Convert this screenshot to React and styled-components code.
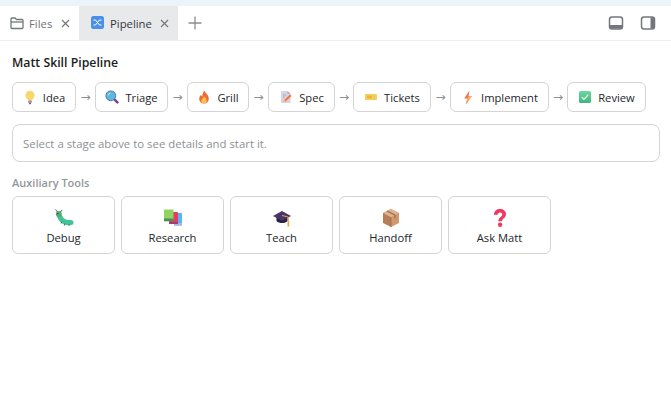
import React from "react";
import styled, { createGlobalStyle } from "styled-components";

const GlobalStyle = createGlobalStyle`
  html, body { margin: 0; padding: 0; background: #fff; }
  body { font-family: "Open Sans", "Noto Sans", "Liberation Sans", sans-serif; color: #1f2328; }
`;

const Page = styled.div`
  width: 671px;
  height: 403px;
  overflow: hidden;
  display: flex;
  flex-direction: column;
`;

const TopStrip = styled.div`
  height: 6px;
  background: #ebf4f9;
`;

const TabBar = styled.div`
  height: 34px;
  display: flex;
  align-items: stretch;
  border-bottom: 1px solid #eeeeee;
`;

const Tab = styled.div`
  width: ${(p) => p.$width}px;
  display: flex;
  align-items: center;
  padding-left: ${(p) => p.$pad}px;
  box-sizing: border-box;
  background: ${(p) => (p.$active ? "#e8e9eb" : "#fff")};
  color: ${(p) => (p.$active ? "#33383e" : "#6f7479")};
  font-size: 11.3px;
`;

const TabIcon = styled.span`
  display: flex;
  width: 14px;
  height: 14px;
  margin-right: ${(p) => p.$gap}px;
`;

const TabClose = styled.span`
  display: flex;
  margin-left: auto;
  margin-right: ${(p) => p.$right}px;
`;

const AddTab = styled.div`
  width: 34px;
  display: flex;
  align-items: center;
  justify-content: center;
`;

const BarActions = styled.div`
  margin-left: auto;
  display: flex;
  align-items: center;
  gap: 16px;
  padding-right: 15px;
`;

const Content = styled.div`
  padding: 13px 12px 0;
  display: flex;
  flex-direction: column;
`;

const Title = styled.div`
  font-size: 12.3px;
  line-height: 17px;
  font-weight: 600;
  color: #1a1d21;
`;

const Flow = styled.div`
  display: flex;
  align-items: center;
  margin-top: 11px;
`;

const Stage = styled.div`
  width: ${(p) => p.$width}px;
  height: 30px;
  box-sizing: border-box;
  border: 1px solid #d4d4d4;
  border-radius: 6px;
  display: flex;
  align-items: center;
  justify-content: center;
  gap: 6px;
  font-size: 11.2px;
  color: #22262b;
  background: #fff;
`;

const Arrow = styled.span`
  width: ${(p) => p.$width}px;
  text-align: center;
  color: #8b8d90;
  font-size: 12px;
  font-family: "DejaVu Sans", sans-serif;
`;

const Hint = styled.div`
  margin-top: 12px;
  width: 648px;
  height: 38px;
  box-sizing: border-box;
  border: 1px solid #d4d4d4;
  border-radius: 8px;
  padding-left: 10px;
  display: flex;
  align-items: center;
  font-size: 11.4px;
  color: #8d9094;
`;

const SectionLabel = styled.div`
  margin-top: 13px;
  font-size: 11px;
  line-height: 15px;
  font-weight: 600;
  color: #94979b;
`;

const ToolRow = styled.div`
  display: flex;
  gap: 6px;
  margin-top: 6px;
`;

const Tool = styled.div`
  width: 103px;
  height: 58px;
  box-sizing: border-box;
  border: 1px solid #d4d4d4;
  border-radius: 6px;
  display: flex;
  flex-direction: column;
  align-items: center;
  justify-content: flex-start;
  padding-top: 11px;
  font-size: 11.2px;
  color: #22262b;
`;

const ToolIcon = styled.span`
  display: flex;
  height: 20px;
  margin-bottom: 1px;
`;

const ToolName = styled.span`
  line-height: 17px;
`;

const Bulb = () => (
  <svg width="14" height="15" viewBox="0 0 14 15">
    <path d="M7 .8a4.600 4.600 0 0 0-2.800 8.200c.5.5.8 1 .9 1.700h3.800c.1-.7.4-1.200.9-1.700A4.600 4.600 0 0 0 7 .8z" fill="#f8d76e" />
    <rect x="5.200" y="10.500" width="3.600" height="2.600" rx=".8" fill="#a08fb0" />
    <rect x="6" y="13" width="2" height="1.200" fill="#7a668a" />
  </svg>
);
const Magnifier = () => (
  <svg width="14" height="14" viewBox="0 0 14 14">
    <path d="M8.600 8.600l3.800 3.800" stroke="#74409a" strokeWidth="2.400" strokeLinecap="round" />
    <circle cx="5.800" cy="5.800" r="4.900" fill="#5fb8dc" stroke="#4a7ea8" strokeWidth="1" />
    <path d="M3.200 5.400a2.800 2.800 0 0 1 2.200-2.200" stroke="#c6e9f6" strokeWidth="1" fill="none" />
  </svg>
);
const Fire = () => (
  <svg width="14" height="14" viewBox="0 0 14 14">
    <path d="M7.400.4c.4 2.400 4.400 4 4.400 8.400A4.700 4.700 0 0 1 7 13.600a4.700 4.700 0 0 1-4.800-4.800c0-1.900 1.100-3.200 1.900-4.100.2 1 .6 1.600 1.300 1.900C5.200 4.500 6 2.200 7.400.4z" fill="#ee6a32" />
    <path d="M7.300 6.200c.3 1.300 2.400 2 2.400 4.300A2.600 2.600 0 0 1 7 13.300a2.600 2.600 0 0 1-2.700-2.800c0-1.600 2.400-2.500 3-4.300z" fill="#fbc04e" />
  </svg>
);
const Memo = () => (
  <svg width="14" height="14" viewBox="0 0 14 14">
    <path d="M2 1h6.500L11.500 4v9H2z" fill="#d9d2e3" />
    <path d="M8.500 1v3h3z" fill="#b4a9c4" />
    <path d="M4 5h3M4 7h2" stroke="#a99dba" strokeWidth=".8" />
    <path d="M4.500 12l.6-2 6-5.500 1.500 1.500-6 5.500z" fill="#f0783c" />
    <path d="M4.500 12l.6-2 1.500 1.500z" fill="#f7c9a0" />
  </svg>
);
const Ticket = () => (
  <svg width="14" height="14" viewBox="0 0 14 14">
    <rect x="1" y="4" width="12" height="6" rx=".6" fill="#f6cf5c" />
    <rect x="3" y="5.600" width="5" height="2.800" fill="#edb53c" />
    <path d="M10 4.500v5" stroke="#e9b544" strokeWidth="1" strokeDasharray="1 1" />
  </svg>
);
const Bolt = () => (
  <svg width="14" height="15" viewBox="-2 0 14 15">
    <path d="M6.500 .5L1.200 8.500h3L3 14.500 8.800 6H5.600z" fill="#f26f52" />
    <path d="M5.600 6h3.200L3 14.500l1.200-6z" fill="#fbaa5e" />
  </svg>
);
const Check = () => (
  <svg width="14" height="14" viewBox="0 0 14 14">
    <defs>
      <linearGradient id="checkFill" x1="0" y1="0" x2="0" y2="1">
        <stop offset="0" stopColor="#6fd6a0" />
        <stop offset="1" stopColor="#3fb67e" />
      </linearGradient>
    </defs>
    <rect x="1" y="1" width="12" height="12" rx="1.600" fill="url(#checkFill)" />
    <path d="M3.800 7.200l2.200 2.200 4.200-4.600" stroke="#e4f8ec" strokeWidth="1.300" fill="none" />
  </svg>
);
const Bug = () => (
  <svg width="20" height="20" viewBox="0 0 20 20">
    <path d="M5 7c1.500 4 4 7 8 7.500h4" stroke="#43c497" strokeWidth="5" strokeLinecap="round" fill="none" />
    <path d="M1.500 1.500l2.500 2.800M8 2L6 4.500" stroke="#2d6a5a" strokeWidth="1" />
    <circle cx="4.800" cy="6" r="2.900" fill="#5aa873" />
    <circle cx="3.800" cy="5.600" r=".7" fill="#1d3b33" />
    <path d="M8 13.500l-1 2M11 15.500l-.6 2M15 16.500v1.500" stroke="#23705a" strokeWidth="1" />
  </svg>
);
const Books = () => (
  <svg width="20" height="20" viewBox="0 0 20 20">
    <rect x="11" y="5" width="8" height="12.500" rx=".8" fill="#56b6f0" />
    <rect x="11" y="15" width="8" height="2.500" fill="#a6b8e8" />
    <rect x="6" y="4" width="9" height="12" rx=".8" fill="#e23c64" />
    <rect x="6" y="14" width="9" height="2" fill="#a73a74" />
    <rect x="1" y="1.500" width="9.500" height="11.500" rx=".8" fill="#8fd45e" />
    <rect x="1" y="10.500" width="9.500" height="2.800" fill="#4a8f58" />
  </svg>
);
const Cap = () => (
  <svg width="20" height="20" viewBox="0 0 20 20">
    <path d="M4.500 8v5c2.500 2.800 8.500 2.800 11 0V8z" fill="#2a2140" />
    <path d="M10 3L1 8l9 4.800L19 8z" fill="#46366a" />
    <path d="M10 7.500l6.300 1.500v5" stroke="#f0a33e" strokeWidth="1" fill="none" />
    <rect x="15.500" y="13.500" width="1.700" height="5" fill="#f0a33e" />
  </svg>
);
const Box = () => (
  <svg width="20" height="20" viewBox="0 0 20 20">
    <path d="M10 1L2 5v10l8 4z" fill="#b77f58" />
    <path d="M10 1l8 4v10l-8 4z" fill="#cf9a70" />
    <path d="M2 5l8 4.300L18 5l-8-4z" fill="#dfb38b" />
    <path d="M6 3l8 4.200v3.300" stroke="#a16e4b" strokeWidth="1.300" fill="none" />
    <path d="M10 9.300V19" stroke="#8d5f40" strokeWidth=".6" />
  </svg>
);
const Question = () => (
  <svg width="20" height="20" viewBox="0 0 20 20">
    <path d="M4 6.800C4 3 6.800 1 10 1s6 2 6 5.300c0 3.900-4 4.100-4 7H8.300c0-4.300 4-4.500 4-6.900 0-1.100-1-2-2.300-2S7.700 5.400 7.700 6.800z" fill="#ee3a62" />
    <circle cx="10.100" cy="16.800" r="2.200" fill="#ee3a62" />
  </svg>
);

const CloseIcon = ({ color }) => (
  <svg width="9" height="9" viewBox="0 0 9 9">
    <path d="M1 1l7 7M8 1L1 8" stroke={color} strokeWidth="1.300" />
  </svg>
);

const stages = [
  { name: "Idea", icon: <Bulb />, width: 64, arrow: 19 },
  { name: "Triage", icon: <Magnifier />, width: 73, arrow: 19 },
  { name: "Grill", icon: <Fire />, width: 62, arrow: 19 },
  { name: "Spec", icon: <Memo />, width: 67, arrow: 18 },
  { name: "Tickets", icon: <Ticket />, width: 78, arrow: 19 },
  { name: "Implement", icon: <Bolt />, width: 99, arrow: 18 },
  { name: "Review", icon: <Check />, width: 79 },
];

const tools = [
  { name: "Debug", icon: <Bug /> },
  { name: "Research", icon: <Books /> },
  { name: "Teach", icon: <Cap /> },
  { name: "Handoff", icon: <Box /> },
  { name: "Ask Matt", icon: <Question /> },
];

const App = () => {
  return (
    <Page>
      <GlobalStyle />
      <TopStrip />
      <TabBar>
        <Tab $width={79} $pad={10}>
          <TabIcon $gap={5}>
            <svg width="14" height="14" viewBox="0 0 14 14" fill="none" stroke="#73777c" strokeWidth="1.300">
              <path d="M1 11.500V3a1 1 0 0 1 1-1h3l1.500 1.500H12a1 1 0 0 1 1 1V11.500a1 1 0 0 1-1 1H2a1 1 0 0 1-1-1z" />
              <path d="M1 6h12" />
            </svg>
          </TabIcon>
          Files
          <TabClose $right={9}><CloseIcon color="#777b80" /></TabClose>
        </Tab>
        <Tab $width={99} $pad={12} $active>
          <TabIcon $gap={5}>
            <svg width="13" height="13" viewBox="0 0 13 13">
              <rect width="13" height="13" rx="2.500" fill="#4c8fe8" />
              <path d="M2.500 4h2l4 5h2M2.500 9h2l4-5h2" stroke="#fff" strokeWidth="1" fill="none" />
            </svg>
          </TabIcon>
          Pipeline
          <TabClose $right={9}><CloseIcon color="#777b80" /></TabClose>
        </Tab>
        <AddTab>
          <svg width="14" height="14" viewBox="0 0 14 14">
            <path d="M7 .5v13M.5 7h13" stroke="#8a8d91" strokeWidth="1.300" />
          </svg>
        </AddTab>
        <BarActions>
          <svg width="16" height="16" viewBox="0 0 16 16" fill="none">
            <rect x="1.500" y="2" width="13" height="12" rx="2.500" stroke="#73777c" strokeWidth="1.500" />
            <path d="M2 10h12v2.500a1 1 0 0 1-1 1H3a1 1 0 0 1-1-1z" fill="#73777c" />
          </svg>
          <svg width="16" height="16" viewBox="0 0 16 16" fill="none">
            <rect x="1.500" y="2" width="13" height="12" rx="2.500" stroke="#73777c" strokeWidth="1.500" />
            <path d="M10.500 2.500H13a1 1 0 0 1 1 1v9a1 1 0 0 1-1 1h-2.500z" fill="#73777c" />
          </svg>
        </BarActions>
      </TabBar>
      <Content>
        <Title>Matt Skill Pipeline</Title>
        <Flow>
          {stages.map((s) => (
            <React.Fragment key={s.name}>
              <Stage $width={s.width}>
                {s.icon}
                <span>{s.name}</span>
              </Stage>
              {s.arrow && <Arrow $width={s.arrow}>→</Arrow>}
            </React.Fragment>
          ))}
        </Flow>
        <Hint>Select a stage above to see details and start it.</Hint>
        <SectionLabel>Auxiliary Tools</SectionLabel>
        <ToolRow>
          {tools.map((t) => (
            <Tool key={t.name}>
              <ToolIcon>{t.icon}</ToolIcon>
              <ToolName>{t.name}</ToolName>
            </Tool>
          ))}
        </ToolRow>
      </Content>
    </Page>
  );
};

export default App;
